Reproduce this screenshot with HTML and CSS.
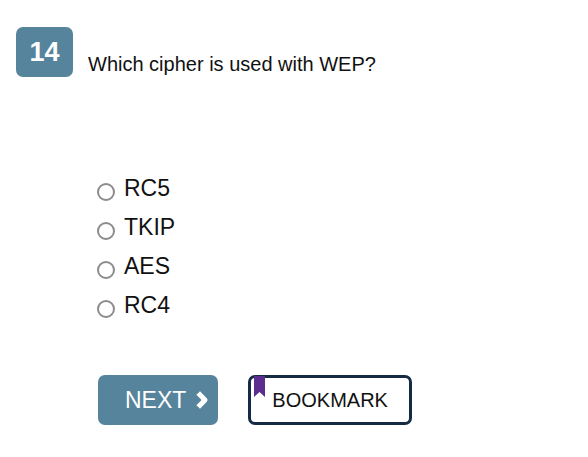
FILE: index.html
```html
<!DOCTYPE html>
<html lang="en">
<head>
<meta charset="utf-8">
<title>Question 14</title>
<link rel="stylesheet" href="styles.css">
</head>
<body>
<form class="quiz">
  <div class="number">14</div>
  <fieldset class="question">
    <legend class="prompt">Which cipher is used with WEP?</legend>
    <div class="answers">
      <label class="answer"><input type="radio" name="cipher"><span>RC5</span></label>
      <label class="answer"><input type="radio" name="cipher"><span>TKIP</span></label>
      <label class="answer"><input type="radio" name="cipher"><span>AES</span></label>
      <label class="answer"><input type="radio" name="cipher"><span>RC4</span></label>
    </div>
    <div class="actions">
      <button class="button next" type="button">NEXT
        <svg class="chevron" width="13" height="20" viewBox="0 0 13 20" aria-hidden="true"><path d="M2.200 3l6.800 7-6.800 7" fill="none" stroke="currentColor" stroke-width="5" stroke-linejoin="round"/></svg>
      </button>
      <button class="button bookmark" type="button">
        <svg class="ribbon" width="11" height="21" viewBox="0 0 11 21" aria-hidden="true"><path d="M0 0h11v21l-5.500-5-5.500 5z" fill="#5b2d8e"/></svg>
        BOOKMARK
      </button>
    </div>
  </fieldset>
</form>
</body>
</html>
```
FILE: styles.css
```css
* {
  box-sizing: border-box;
}

body {
  margin: 0;
  background: #fff;
  color: #111;
  font-family: "Liberation Sans", Arial, sans-serif;
}

.quiz {
  display: flex;
  align-items: flex-start;
  gap: 15px;
  padding: 27px 16px;
}

.number {
  flex: none;
  width: 57px;
  border-radius: 7px;
  background: #56849c;
  color: #fff;
  font-size: 27px;
  font-weight: bold;
  line-height: 50px;
  text-align: center;
}

.question {
  flex: 1;
  min-width: 0;
  margin: 0;
  padding: 0;
  border: 0;
}

.prompt {
  padding: 25px 0 0;
  font-size: 20px;
  line-height: 24px;
}

.answers {
  display: flex;
  flex-direction: column;
  align-items: flex-start;
  gap: 11px;
  padding: 98px 0 0 9px;
}

.answer {
  display: flex;
  align-items: center;
  gap: 9px;
  font-size: 23px;
  line-height: 28px;
}

.answer input {
  appearance: none;
  width: 18px;
  height: 18px;
  margin: 8px 0 0;
  border: 2px solid #8c8c8c;
  border-radius: 50%;
  background: #fff;
}

.answer input:checked {
  border-width: 5px;
}

.actions {
  display: flex;
  flex-wrap: wrap;
  gap: 30px;
  padding: 56px 0 0 10px;
}

.button {
  display: flex;
  align-items: center;
  height: 50px;
  border-radius: 7px;
  font-family: inherit;
}

.next {
  gap: 10px;
  padding: 0 9px 0 27px;
  border: 0;
  background: #56849c;
  color: #fff;
  font-size: 23px;
}

.bookmark {
  position: relative;
  padding: 0 21px;
  border: 3px solid #142a45;
  background: #fff;
  color: #111;
  font-size: 20px;
}

.ribbon {
  position: absolute;
  top: -2px;
  left: 3px;
}
```
